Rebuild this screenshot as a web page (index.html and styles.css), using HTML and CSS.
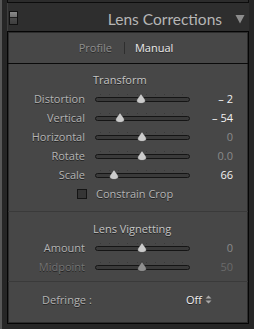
FILE: index.html
```html
<!DOCTYPE html>
<html>
<head>
<meta charset="utf-8">
<link rel="stylesheet" href="styles.css">
</head>
<body>
<div class="frame">
  <div class="prev"></div>
  <div class="head">
    <span class="toggle"></span>
    <span class="title">Lens Corrections</span>
    <svg class="caret" width="10" height="10" viewBox="0 0 10 10"><path d="M0.5 1 L9.5 1 L5 9.5 Z" fill="#8c8c8c"/></svg>
  </div>
  <div class="panel">
    <div class="tabs">
      <span class="tab">Profile</span>
      <span class="tab-sep"></span>
      <span class="tab on">Manual</span>
    </div>
    <div class="sec">
      <div class="sec-title">Transform</div>
      <div class="row">
        <span class="lbl">Distortion</span>
        <div class="slider"><div class="ticks"></div><div class="track"></div><svg class="thumb" style="left:48.9%" width="10" height="11" viewBox="0 0 10 11"><path d="M5 0.5 L9.4 7 Q9.4 10.5 5 10.5 Q0.6 10.5 0.6 7 Z"/></svg></div>
        <span class="val hi">– 2</span>
      </div>
      <div class="row">
        <span class="lbl">Vertical</span>
        <div class="slider"><div class="ticks"></div><div class="track"></div><svg class="thumb" style="left:25.8%" width="10" height="11" viewBox="0 0 10 11"><path d="M5 0.5 L9.4 7 Q9.4 10.5 5 10.5 Q0.6 10.5 0.6 7 Z"/></svg></div>
        <span class="val hi">– 54</span>
      </div>
      <div class="row">
        <span class="lbl">Horizontal</span>
        <div class="slider"><div class="ticks"></div><div class="track"></div><svg class="thumb" style="left:49.5%" width="10" height="11" viewBox="0 0 10 11"><path d="M5 0.5 L9.4 7 Q9.4 10.5 5 10.5 Q0.6 10.5 0.6 7 Z"/></svg></div>
        <span class="val">0</span>
      </div>
      <div class="row">
        <span class="lbl">Rotate</span>
        <div class="slider"><div class="ticks"></div><div class="track"></div><svg class="thumb" style="left:49.5%" width="10" height="11" viewBox="0 0 10 11"><path d="M5 0.5 L9.4 7 Q9.4 10.5 5 10.5 Q0.6 10.5 0.6 7 Z"/></svg></div>
        <span class="val">0.0</span>
      </div>
      <div class="row">
        <span class="lbl">Scale</span>
        <div class="slider"><div class="ticks"></div><div class="track"></div><svg class="thumb" style="left:20%" width="10" height="11" viewBox="0 0 10 11"><path d="M5 0.5 L9.4 7 Q9.4 10.5 5 10.5 Q0.6 10.5 0.6 7 Z"/></svg></div>
        <span class="val hi">66</span>
      </div>
      <div class="check"><span class="box"></span><span>Constrain Crop</span></div>
    </div>
    <div class="sec sec2">
      <div class="sec-title">Lens Vignetting</div>
      <div class="row">
        <span class="lbl">Amount</span>
        <div class="slider"><div class="ticks"></div><div class="track"></div><svg class="thumb" style="left:49.5%" width="10" height="11" viewBox="0 0 10 11"><path d="M5 0.5 L9.4 7 Q9.4 10.5 5 10.5 Q0.6 10.5 0.6 7 Z"/></svg></div>
        <span class="val">0</span>
      </div>
      <div class="row off">
        <span class="lbl">Midpoint</span>
        <div class="slider"><div class="ticks"></div><div class="track"></div><svg class="thumb" style="left:49.5%" width="10" height="11" viewBox="0 0 10 11"><path d="M5 0.5 L9.4 7 Q9.4 10.5 5 10.5 Q0.6 10.5 0.6 7 Z"/></svg></div>
        <span class="val">50</span>
      </div>
    </div>
    <div class="defringe">
      <span class="lbl">Defringe :</span>
      <span class="pick">Off<svg class="updown" width="7" height="9" viewBox="0 0 7 9"><path d="M3.5 0.5 L6.5 3.5 L0.5 3.5 Z M3.5 8.5 L6.5 5.5 L0.5 5.5 Z" fill="#a8a8a8"/></svg></span>
    </div>
  </div>
</div>
</body>
</html>
```

FILE: styles.css
```css
html, body {
  margin: 0;
  padding: 0;
}
body {
  width: 254px;
  height: 329px;
  overflow: hidden;
  background: #262626;
  font-family: "Open Sans", "Noto Sans", sans-serif;
  font-size: 11px;
}
.frame {
  height: 329px;
  box-sizing: border-box;
  border-left: 2px solid #575757;
  padding: 0 5px;
  display: flex;
  flex-direction: column;
}
.prev {
  height: 3px;
  box-sizing: border-box;
  border: 1px solid #0c0c0c;
  border-top: 0;
  background: #2c2c2c;
}
.head {
  height: 28px;
  display: flex;
  align-items: center;
  background: #2e2e2e;
  border-left: 1px solid #3e3e3e;
}
.toggle {
  width: 9px;
  height: 14px;
  margin: 2px 0 0 1px;
  box-sizing: border-box;
  border: 1px solid #111;
  background: linear-gradient(#8a8a8a 0, #6e6e6e 45%, #1e1e1e 45%, #1e1e1e 52%, #4a4a4a 52%, #3e3e3e 100%);
}
.title {
  margin-left: auto;
  font-family: "Lato", sans-serif;
  font-size: 15.5px;
  color: #b6b6b6;
  padding-top: 3px;
}
.caret {
  margin: 3px 4px 0 13px;
}
.panel {
  height: 293px;
  box-sizing: border-box;
  border: 1px solid #050505;
  box-shadow: inset 0 0 0 1px #2c2c2c;
  background: #474747;
  display: flex;
  flex-direction: column;
}
.tabs {
  height: 31px;
  border-bottom: 1px solid #0a0a0a;
  display: flex;
  align-items: center;
  justify-content: center;
  padding-right: 4px;
  text-shadow: 0 1px 0 rgba(0,0,0,0.45);
}
.tab {
  color: #8e8e8e;
}
.tab.on {
  color: #ececec;
}
.tab-sep {
  width: 1px;
  height: 12px;
  background: #2e2e2e;
  margin: 1px 10px 0 12px;
}
.sec {
  padding: 6px 0 8px;
  border-bottom: 1px solid #3a3a3a;
}
.sec2 {
  padding: 7px 0 5px;
}
.sec-title {
  height: 19px;
  line-height: 19px;
  padding-left: 85px;
  color: #c4c4c4;
  text-shadow: 0 1px 0 rgba(0,0,0,0.55);
}
.row {
  height: 19px;
  display: grid;
  grid-template-columns: 77px 95px 43px;
  column-gap: 10px;
  align-items: center;
  line-height: 19px;
}
.lbl {
  text-align: right;
  color: #b4b4b4;
  text-shadow: 0 1px 0 rgba(0,0,0,0.55);
}
.val {
  text-align: right;
  color: #8a8a8a;
  padding-right: 10px;
}
.val.hi {
  color: #f2f2f2;
}
.slider {
  position: relative;
  height: 19px;
  display: flex;
  flex-direction: column;
  justify-content: center;
}
.ticks {
  height: 1px;
  margin: 0 0 2px 5px;
  width: 84px;
  background: repeating-linear-gradient(to right, #393939 0, #393939 1px, transparent 1px, transparent 9.15px);
}
.track {
  height: 5px;
  box-sizing: border-box;
  border: 1px solid #151515;
  border-radius: 3px;
  background: #3a3a3a;
  margin-bottom: 1px;
}
.thumb {
  position: absolute;
  top: 4px;
  margin-left: -5px;
}
.thumb path {
  fill: #cbcbcb;
  stroke: #2a2a2a;
  stroke-width: 0.6;
}
.row.off .lbl {
  color: #737373;
}
.row.off .val {
  color: #6a6a6a;
}
.row.off .thumb path {
  fill: #8f8f8f;
}
.check {
  height: 19px;
  display: flex;
  align-items: center;
  padding-left: 69px;
  color: #b4b4b4;
  text-shadow: 0 1px 0 rgba(0,0,0,0.55);
}
.box {
  width: 10px;
  height: 10px;
  box-sizing: border-box;
  border: 1px solid #141414;
  background: #353535;
  margin-right: 9px;
}
.defringe {
  display: flex;
  align-items: center;
  justify-content: space-between;
  height: 19px;
  margin-top: 8px;
  padding: 0 36px 0 34px;
  text-shadow: 0 1px 0 rgba(0,0,0,0.55);
}
.defringe .lbl {
  text-align: left;
}
.pick {
  color: #f0f0f0;
  display: flex;
  align-items: center;
}
.updown {
  margin-left: 3px;
}
```
